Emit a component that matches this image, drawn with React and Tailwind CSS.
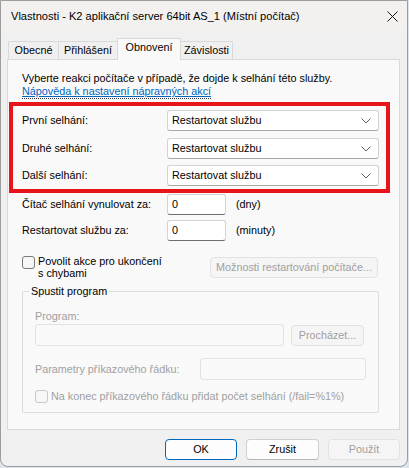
import React from "react";

const F = { fontFamily: "'Liberation Sans', Arial, sans-serif" };

function Chevron({ color = "#5f5f5f" }) {
  return (
    <svg width="10" height="6" viewBox="0 0 10 6" fill="none">
      <path d="M0.5 0.5 L5 5 L9.5 0.5" stroke={color} strokeWidth="1" />
    </svg>
  );
}

function Select({ label, mt }) {
  return (
    <div className={`flex items-center h-[21px] ${mt}`}>
      <div className="w-[154px] pl-[9px]">{label}</div>
      <div className="w-[212px] h-[21px] bg-white border border-[#d3d3d3] border-b-[#a8a8a8] rounded-[3px] flex items-center justify-between pl-[4px] pr-[7px]">
        <span>Restartovat službu</span>
        <Chevron />
      </div>
    </div>
  );
}

function Checkbox({ disabled }) {
  return (
    <div
      className={`w-[13px] h-[13px] rounded-[3px] border shrink-0 ${
        disabled ? "border-[#c8c8c8] bg-[#f7f7f7]" : "border-[#7a7a7a] bg-[#f7f7f7]"
      }`}
    />
  );
}

export default function App() {
  return (
    <div className="w-[409px] h-[468px] bg-[#dde4ec] text-[10.8px] leading-[13px] text-black whitespace-nowrap" style={F}>
      <div className="w-[408px] h-[467px] border border-[#9c9c9c] rounded-b-[8px] overflow-hidden flex flex-col bg-[#f0f0f0]">
        {/* title bar */}
        <div className="h-[30px] bg-[#f3f1f0] flex items-center justify-between pl-[10px] pr-[9px] shrink-0">
          <span className="text-[11.1px]">Vlastnosti - K2 aplikační server 64bit AS_1 (Místní počítač)</span>
          <svg width="11" height="11" viewBox="0 0 11 11">
            <path d="M0.5 0.5 L10.5 10.5 M10.5 0.5 L0.5 10.5" stroke="#1a1a1a" strokeWidth="1" />
          </svg>
        </div>
        {/* body */}
        <div className="flex-1 pl-[6px] pr-[7px] flex flex-col">
          {/* tabs */}
          <div className="flex items-end h-[21px] mt-[7px] pl-[1px] relative z-10">
            <div className="w-[51px] h-[18px] border border-b-0 border-[#d9d9d9] bg-[#f0f0f0] flex items-center justify-center">Obecné</div>
            <div className="w-[60px] h-[18px] -ml-px border border-b-0 border-[#d9d9d9] bg-[#f0f0f0] flex items-center justify-center">Přihlášení</div>
            <div className="w-[64px] h-[22px] -ml-px -mb-px border border-b-0 border-[#d9d9d9] bg-[#f9f9f9] flex items-center justify-center pb-[4px]">Obnovení</div>
            <div className="w-[53px] h-[18px] -ml-px border border-b-0 border-[#d9d9d9] bg-[#f0f0f0] flex items-center justify-center">Závislosti</div>
          </div>
          {/* panel */}
          <div className="h-[371px] border border-[#d9d9d9] bg-[#f9f9f9] flex flex-col">
            <div className="pl-[14px] pt-[12px]">
              <div>Vyberte reakci počítače v případě, že dojde k selhání této služby.</div>
              <div className="flex">
                <span className="text-[#0067c0] underline border-b border-dotted border-[#333]">Nápověda k nastavení nápravných akcí</span>
              </div>
            </div>
            {/* red box */}
            <div className="ml-[1px] mt-[3px] w-[381px] h-[91px] border-4 border-[#e8141c] flex flex-col">
              <Select label="První selhání:" mt="mt-[4px]" />
              <Select label="Druhé selhání:" mt="mt-[7px]" />
              <Select label="Další selhání:" mt="mt-[6px]" />
            </div>
            {/* counters */}
            <div className="flex items-center h-[21px] mt-[1px] pl-[14px]">
              <div className="w-[145px]">Čítač selhání vynulovat za:</div>
              <div className="w-[59px] h-[21px] bg-white border border-[#d3d3d3] border-b-[#6e6e6e] rounded-[3px] flex items-center pl-[4px]">0</div>
              <div className="ml-[10px]">(dny)</div>
            </div>
            <div className="flex items-center h-[21px] mt-[5px] pl-[14px]">
              <div className="w-[145px]">Restartovat službu za:</div>
              <div className="w-[59px] h-[21px] bg-white border border-[#d3d3d3] border-b-[#6e6e6e] rounded-[3px] flex items-center pl-[4px]">0</div>
              <div className="ml-[10px]">(minuty)</div>
            </div>
            {/* checkbox + button */}
            <div className="flex items-start mt-[15px] pl-[14px]">
              <div className="flex items-start w-[188px]">
                <Checkbox />
                <div className="ml-[3px] -mt-[1px] leading-[12px]">
                  Povolit akce pro ukončení
                  <br />
                  s chybami
                </div>
              </div>
              <div className="w-[168px] h-[21px] mt-[1px] border border-[#e2e2e2] bg-[#f5f5f5] rounded-[4px] text-[#a0a0a0] flex items-center justify-center">
                Možnosti restartování počítače...
              </div>
            </div>
            {/* group box */}
            <fieldset className="ml-[14px] mt-[6px] w-[357px] border border-[#dcdcdc] rounded-[2px] pb-[9px]">
              <legend className="ml-[6px] px-[2px] leading-[13px]">Spustit program</legend>
              <div className="pl-[12px]">
                <div className="text-[#a0a0a0] mt-[12px]">Program:</div>
                <div className="flex mt-[1px] items-center">
                  <div className="w-[249px] h-[22px] border border-[#e2e2e2] bg-[#f9f9f9] rounded-[3px]" />
                  <div className="ml-[7px] w-[73px] h-[21px] border border-[#e2e2e2] bg-[#f5f5f5] rounded-[4px] text-[#a0a0a0] flex items-center justify-center">
                    Procházet...
                  </div>
                </div>
                <div className="flex items-center mt-[12px]">
                  <div className="w-[165px] text-[#a0a0a0]">Parametry příkazového řádku:</div>
                  <div className="w-[166px] h-[22px] border border-[#e2e2e2] bg-[#f9f9f9] rounded-[3px]" />
                </div>
                <div className="flex items-center mt-[10px]">
                  <Checkbox disabled />
                  <span className="ml-[3px] text-[#a0a0a0]">Na konec příkazového řádku přidat počet selhání (/fail=%1%)</span>
                </div>
              </div>
            </fieldset>
          </div>
          {/* buttons */}
          <div className="flex justify-end gap-[9px] mt-[9px]">
            <div className="w-[72px] h-[21px] bg-[#fdfdfd] border border-[#0067c0] rounded-[4px] flex items-center justify-center">OK</div>
            <div className="w-[73px] h-[21px] bg-[#fdfdfd] border border-[#d0d0d0] border-b-[#b5b5b5] rounded-[4px] flex items-center justify-center">Zrušit</div>
            <div className="w-[72px] h-[21px] bg-[#f5f5f5] border border-[#e2e2e2] rounded-[4px] text-[#a0a0a0] flex items-center justify-center">Použít</div>
          </div>
        </div>
      </div>
    </div>
  );
}
